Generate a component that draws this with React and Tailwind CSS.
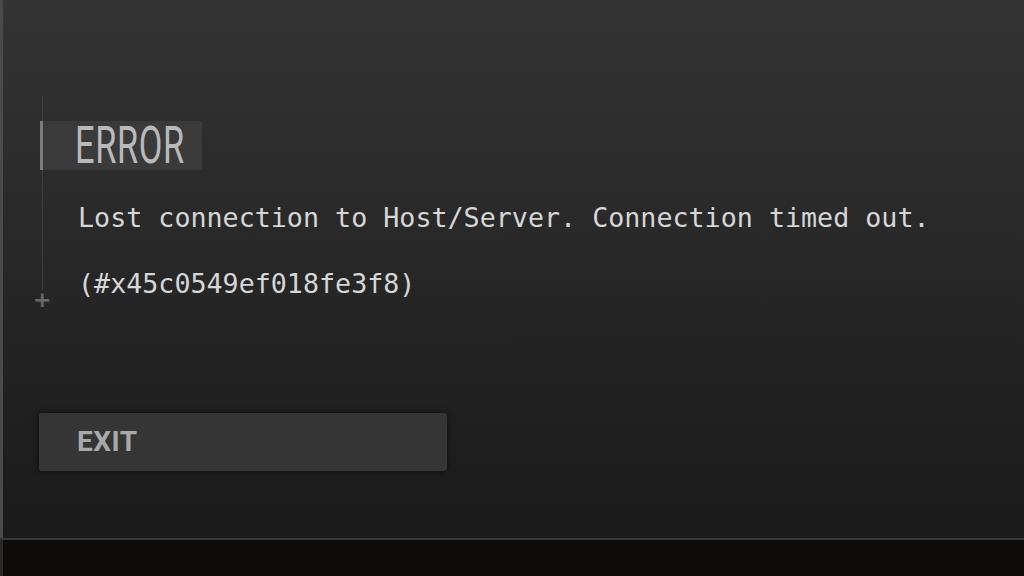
import React from "react";

export default function App() {
  return (
    <div className="w-[1024px] h-[576px] flex flex-col overflow-hidden bg-[#0d0c0b]">
      <div className="relative flex-1 flex flex-col bg-gradient-to-b from-[#343434] via-[#272727] to-[#1a1a1a] border-l-[3px] border-[#4a4a4a]">
        {/* decorative guide line and plus */}
        <div className="absolute left-[39px] top-[95px] h-[195px] w-px bg-[#3e3e3e]" />
        <div className="absolute left-[30px] top-[289px] font-bold text-[#6a6a6a] text-[22px] leading-none" style={{ fontFamily: '"DejaVu Sans", sans-serif' }}>
          +
        </div>

        <div className="pl-[37px] pt-[121px]">
          <div className="relative flex items-center w-[162px] h-[49px] bg-[#3a3a3a] border-l-[3px] border-[#7c7c7c] pl-[32px]">
            <span
              className="inline-block text-[52px] leading-none text-[#b9b9b9] origin-left scale-x-[0.66] tracking-[1px]"
              style={{ fontFamily: "Roboto, sans-serif" }}
            >
              ERROR
            </span>
          </div>
        </div>

        <div
          className="pl-[75px] pt-[33px] flex flex-col gap-[36px] text-[26.7px] leading-[30px] text-[#d6d6d6]"
          style={{ fontFamily: '"DejaVu Sans Mono", monospace' }}
        >
          <p>Lost connection to Host/Server. Connection timed out.</p>
          <p>(#x45c0549ef018fe3f8)</p>
        </div>

        <div className="pl-[36px] pt-[114px]">
          <div className="w-[408px] h-[58px] rounded-[3px] bg-[#353535] shadow-[0_0_6px_rgba(0,0,0,0.6)] flex items-center pl-[38px]">
            <span
              className="text-[28px] font-bold leading-none text-[#a9a9a9] tracking-[0.5px]"
              style={{ fontFamily: "Roboto, sans-serif" }}
            >
              EXIT
            </span>
          </div>
        </div>
      </div>
      <div className="h-[38px] shrink-0 border-t-[2px] border-[#393939] bg-[#0d0c0b] border-l-[3px] border-l-[#2a2a2a]" />
    </div>
  );
}
